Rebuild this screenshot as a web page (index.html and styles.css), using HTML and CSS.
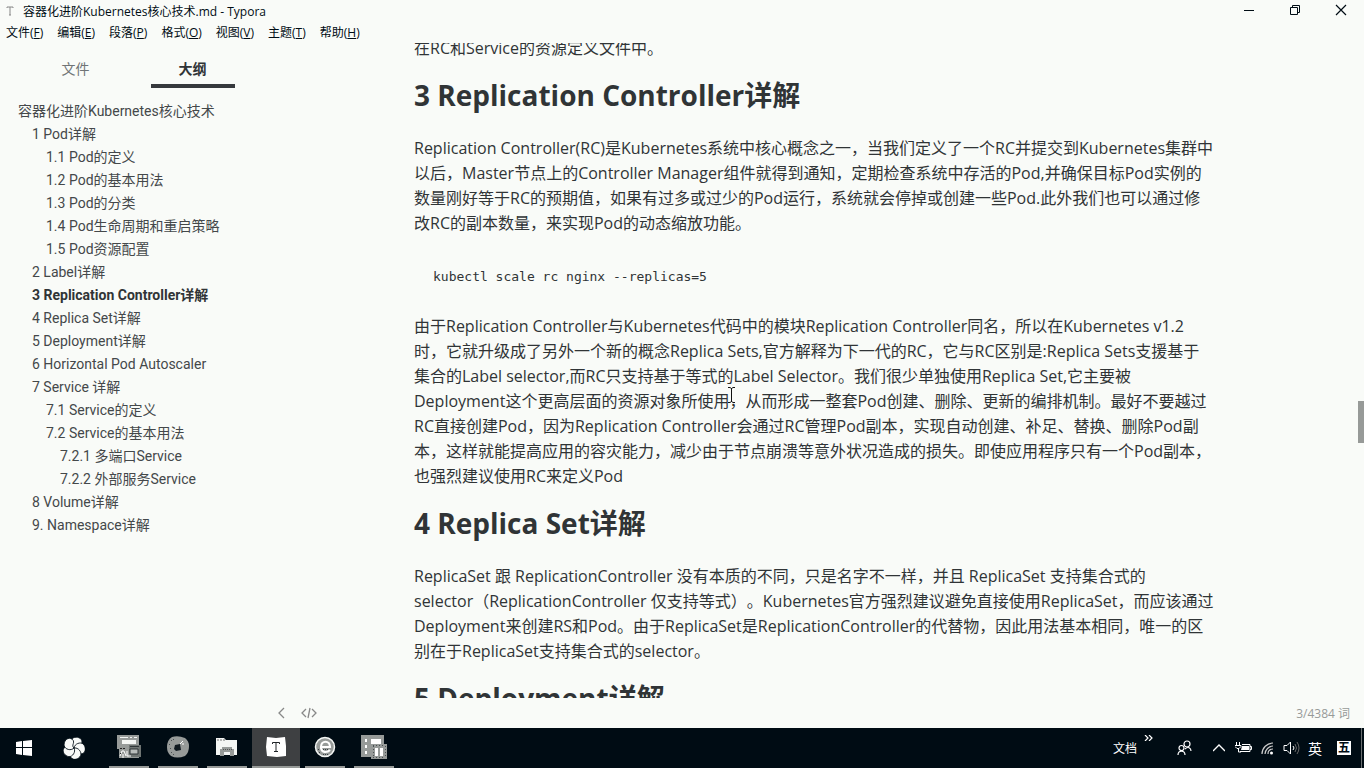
FILE: index.html
```html
<!DOCTYPE html>
<html lang="zh-CN">
<head>
<meta charset="utf-8">
<title>容器化进阶Kubernetes核心技术.md - Typora</title>
<link rel="stylesheet" href="styles.css">
</head>
<body>
<div class="app">
  <header class="titlebar">
    <svg class="app-icon" width="8" height="10" viewBox="0 0 8 10"><path d="M1 2V1h6v1M4 1v8M3 9h2" fill="none" stroke="#888"/></svg>
    <span class="window-title">容器化进阶Kubernetes核心技术.md - Typora</span>
    <div class="window-controls">
      <button type="button" aria-label="最小化"><svg width="12" height="12" viewBox="0 0 12 12"><path d="M1 6.500h10" stroke="#000c14"/></svg></button>
      <button type="button" aria-label="还原"><svg width="12" height="12" viewBox="0 0 12 12"><path d="M1.500 3.500h7v7h-7zM3.500 3.500v-2h7v7h-2" fill="none" stroke="#000c14"/></svg></button>
      <button type="button" aria-label="关闭"><svg width="12" height="12" viewBox="0 0 12 12"><path d="M1 1l10 10M11 1L1 11" stroke="#000c14" stroke-width="1.200"/></svg></button>
    </div>
  </header>
  <nav class="menubar" aria-label="菜单">
    <button type="button">文件(<u>F</u>)</button>
    <button type="button">编辑(<u>E</u>)</button>
    <button type="button">段落(<u>P</u>)</button>
    <button type="button">格式(<u>O</u>)</button>
    <button type="button">视图(<u>V</u>)</button>
    <button type="button">主题(<u>T</u>)</button>
    <button type="button">帮助(<u>H</u>)</button>
  </nav>
  <div class="workspace">
    <aside class="sidebar">
      <div class="tabs">
        <button type="button" class="tab">文件</button>
        <button type="button" class="tab tab-active">大纲</button>
      </div>
      <nav class="outline" aria-label="大纲">
        <a href="#top" class="level-1">容器化进阶Kubernetes核心技术</a>
        <a href="#pod" class="level-2">1 Pod详解</a>
        <a href="#pod-1" class="level-3">1.1 Pod的定义</a>
        <a href="#pod-2" class="level-3">1.2 Pod的基本用法</a>
        <a href="#pod-3" class="level-3">1.3 Pod的分类</a>
        <a href="#pod-4" class="level-3">1.4 Pod生命周期和重启策略</a>
        <a href="#pod-5" class="level-3">1.5 Pod资源配置</a>
        <a href="#label" class="level-2">2 Label详解</a>
        <a href="#rc" class="level-2 current">3 Replication Controller详解</a>
        <a href="#rs" class="level-2">4 Replica Set详解</a>
        <a href="#deployment" class="level-2">5 Deployment详解</a>
        <a href="#hpa" class="level-2">6 Horizontal Pod Autoscaler</a>
        <a href="#service" class="level-2">7 Service 详解</a>
        <a href="#service-1" class="level-3">7.1 Service的定义</a>
        <a href="#service-2" class="level-3">7.2 Service的基本用法</a>
        <a href="#service-21" class="level-4">7.2.1 多端口Service</a>
        <a href="#service-22" class="level-4">7.2.2 外部服务Service</a>
        <a href="#volume" class="level-2">8 Volume详解</a>
        <a href="#namespace" class="level-2">9. Namespace详解</a>
      </nav>
    </aside>
    <main class="editor">
      <article class="document">
        <p>在RC和Service的资源定义文件中。</p>
        <h2 id="rc">3 Replication Controller详解</h2>
        <p>Replication Controller(RC)是Kubernetes系统中核心概念之一，当我们定义了一个RC并提交到Kubernetes集群中<br>以后，Master节点上的Controller Manager组件就得到通知，定期检查系统中存活的Pod,并确保目标Pod实例的<br>数量刚好等于RC的预期值，如果有过多或过少的Pod运行，系统就会停掉或创建一些Pod.此外我们也可以通过修<br>改RC的副本数量，来实现Pod的动态缩放功能。</p>
        <pre><code>kubectl scale rc nginx --replicas=5</code></pre>
        <p>由于Replication Controller与Kubernetes代码中的模块Replication Controller同名，所以在Kubernetes v1.2<br>时，它就升级成了另外一个新的概念Replica Sets,官方解释为下一代的RC，它与RC区别是:Replica Sets支援基于<br>集合的Label selector,而RC只支持基于等式的Label Selector。我们很少单独使用Replica Set,它主要被<br>Deployment这个更高层面的资源对象所使用，从而形成一整套Pod创建、删除、更新的编排机制。最好不要越过<br>RC直接创建Pod，因为Replication Controller会通过RC管理Pod副本，实现自动创建、补足、替换、删除Pod副<br>本，这样就能提高应用的容灾能力，减少由于节点崩溃等意外状况造成的损失。即使应用程序只有一个Pod副本，<br>也强烈建议使用RC来定义Pod</p>
        <h2 id="rs">4 Replica Set详解</h2>
        <p>ReplicaSet 跟 ReplicationController 没有本质的不同，只是名字不一样，并且 ReplicaSet 支持集合式的<br>selector（ReplicationController 仅支持等式）。Kubernetes官方强烈建议避免直接使用ReplicaSet，而应该通过<br>Deployment来创建RS和Pod。由于ReplicaSet是ReplicationController的代替物，因此用法基本相同，唯一的区<br>别在于ReplicaSet支持集合式的selector。</p>
        <h2 id="deployment">5 Deployment详解</h2>
      </article>
      <div class="scroll-thumb"></div>
    </main>
  </div>
  <footer class="statusbar">
    <button type="button" aria-label="隐藏侧边栏"><svg width="8" height="12" viewBox="0 0 8 12"><path d="M7 1L2 6l5 5" fill="none" stroke="#888" stroke-width="1.300"/></svg></button>
    <button type="button" aria-label="源代码模式"><svg width="16" height="12" viewBox="0 0 16 12"><path d="M5 2L1 6l4 4M11 2l4 4-4 4M9 1L7 11" fill="none" stroke="#888" stroke-width="1.300"/></svg></button>
    <span class="word-count">3/4384 词</span>
  </footer>
  <footer class="taskbar">
    <button type="button" class="task" aria-label="开始"><svg width="16" height="16" viewBox="0 0 16 16"><path d="M0 2l6-1v6H0zM7 1l9-1v7H7zM0 8h6v7l-6-1zM7 8h9v8l-9-1z" fill="#fff"/></svg></button>
    <button type="button" class="task fan" aria-label="浏览器"><svg width="22" height="22" viewBox="0 0 22 22"><g fill="#f8faf8" stroke="#000c14" stroke-width=".8"><path id="blade" d="M11 11C7 9 7 3 10 1c4-2 9 0 9 4 0 3-2 4-4 4s-3 0-4 2z"/><use href="#blade" transform="rotate(72 11 11)"/><use href="#blade" transform="rotate(144 11 11)"/><use href="#blade" transform="rotate(216 11 11)"/><use href="#blade" transform="rotate(288 11 11)"/></g></svg></button>
    <div class="running">
      <button type="button" class="task open" aria-label="虚拟机"><svg width="24" height="24" viewBox="0 0 24 24"><path d="M0 0h22v23H2V14H0z" fill="#979b99"/><path d="M5 5h14v4H5z" fill="#f4f6f4"/><path d="M3 2.500h8M13 2.500h2M17 2.500h3" stroke="#f4f6f4"/><path d="M12 10h12v12H12z" fill="#6f7573"/><path d="M13 11.500h9" stroke="#303638"/><path d="M13 14h8v5h-8z" fill="#b9bdbb" stroke="#303638"/><path d="M3 21l2-5h2l2 5M6 23v-4M10 16v5h4" fill="none" stroke="#fff"/><path d="M3 13.500h6M3 18.500h1" stroke="#222" stroke-dasharray="2 1"/></svg></button>
      <button type="button" class="task open" aria-label="录屏"><svg width="22" height="22" viewBox="0 0 22 22"><path d="M5 1Q11-1 18 2q4 3 4 8 0 7-4 10-8 3-14 0-4-3-4-9 0-7 5-10z" fill="#979b99"/><path d="M8 9l5-1 1 6-5 1-2-2z" fill="#101a20"/><path d="M13 8l3-3M15 8h2" stroke="#fff"/><path d="M4 4.500h1M6 3.500h1M2 8.500h1M4 16.500h1M3 12.500h1M6 18.500h1" stroke="#4a5052"/></svg></button>
      <button type="button" class="task open" aria-label="文件资源管理器"><svg width="22" height="20" viewBox="0 0 22 20"><path d="M0 1h8l2 2h11v15H0z" fill="#f4f6f4"/><path d="M1 3h8" stroke="#777" stroke-dasharray="2 1"/><path d="M4 12h2v-2h10v2h2v7h-4v-4H8v4H4z" fill="#979b99"/><path d="M7 12.500h9" stroke="#555" stroke-dasharray="1 1"/></svg></button>
      <button type="button" class="task open selected" aria-label="Typora"><svg width="22" height="22" viewBox="0 0 22 22"><path d="M2 1l9 1 9-1 1 9v10l-9 1-10-1-1-9z" fill="#fff"/><path d="M7.500 8V6.500h7V8M11 6v10M9 15.500h4" fill="none" stroke="#202428"/></svg></button>
      <button type="button" class="task open" aria-label="Internet Explorer"><svg width="22" height="22" viewBox="0 0 22 22"><circle cx="11" cy="11" r="9.500" fill="#979b99" stroke="#f4f6f4" stroke-width="1.500"/><path d="M7 11h9c0-7-9-7-9 0 0 6 6 6 9 3" fill="none" stroke="#fff" stroke-width="2.200"/><path d="M4 13.500h2M9 13.500h5M5 16.500h2M9 18.500h5" stroke="#394044" stroke-dasharray="1 1"/></svg></button>
      <button type="button" class="task open" aria-label="服务器管理器"><svg width="26" height="26" viewBox="0 0 26 26"><path d="M0 1h23v9h3v15H10v-2H0z" fill="#979b99"/><path d="M10 5h10v5H10zM4 5h2v3H4zM4 11h2v3H4zM4 17h2v3H4zM14 14h3v8h-3zM19 14h3v8h-3z" fill="#fff"/><path d="M12 11.500h12M12 23.500h12M12.500 12v11M24.500 12v11" fill="none" stroke="#4a5052" stroke-dasharray="1 2"/></svg></button>
    </div>
    <div class="tray">
      <span class="toolbar-label">文档</span>
      <button type="button" class="more" aria-label="更多"><svg width="9" height="6" viewBox="0 0 9 6"><path d="M1 0l3 3-3 3M5 0l3 3-3 3" fill="none" stroke="#fff" stroke-width="1.200"/></svg></button>
      <button type="button" class="people" aria-label="人脉"><svg width="15" height="16" viewBox="0 0 15 16"><g fill="none" stroke="#fff" stroke-width="1.200"><circle cx="10" cy="4" r="3"/><circle cx="4.500" cy="8" r="2.500"/><path d="M1 15c0-5 7-5 7 0M8 9c3-3 6-1 6 2"/></g></svg></button>
      <button type="button" class="slot" aria-label="显示隐藏的图标"><svg width="12" height="8" viewBox="0 0 12 8"><path d="M0 7l6-6 6 6" fill="none" stroke="#fff" stroke-width="1.400"/></svg></button>
      <button type="button" class="slot" aria-label="电源"><svg width="17" height="12" viewBox="0 0 17 12"><path d="M1.500 0v3M4.500 0v3M0 3.500h6v1L4 6.500H2L0 4.500M3.500 6v4H6" fill="none" stroke="#fff"/><path d="M7 2.500h8v7H5M15 4.500h1.500v3H15" fill="none" stroke="#fff"/><path d="M7 4h7v4H6z" fill="#fff"/></svg></button>
      <button type="button" class="slot" aria-label="网络"><svg width="13" height="13" viewBox="0 0 13 13"><path d="M1 12C1 6 6 1 12 1M4 12c0-4 4-8 8-8M7 12c0-3 2-5 5-5" fill="none" stroke="#ccc" stroke-width="1.200"/><circle cx="10.500" cy="11" r="1.500" fill="#fff"/></svg></button>
      <button type="button" class="slot" aria-label="音量"><svg width="17" height="14" viewBox="0 0 17 14"><path d="M1 4.500h3l3.500-3.500v12L4 9.500H1z" fill="none" stroke="#fff"/><path d="M10 5q2 2 0 4" fill="none" stroke="#fff"/><path d="M12 3q3 4 0 8M14 1q4 6 0 12" fill="none" stroke="#666"/></svg></button>
      <button type="button" class="slot lang">英</button>
      <button type="button" class="ime"><span>五</span></button>
      <button type="button" class="show-desktop" aria-label="显示桌面"></button>
    </div>
  </footer>
  <svg class="pointer" width="7" height="16" viewBox="0 0 7 16"><path d="M0 .5h2l1.500 1L5 .5h2M3.500 1v14M0 15.500h2l1.500-1 1.500 1h2" fill="none" stroke="#111"/></svg>
</div>
</body>
</html>
```

FILE: styles.css
```css
* { box-sizing: border-box; }

body {
  margin: 0;
  background: #f9fbf8;
  color: #303436;
  font-family: "Open Sans", "Noto Sans CJK SC", sans-serif;
  text-spacing-trim: space-all;
}

button {
  margin: 0;
  padding: 0;
  border: 0;
  background: none;
  color: inherit;
  font: inherit;
}

svg { display: block; }

.app {
  display: flex;
  flex-direction: column;
  height: 100vh;
  overflow: hidden;
}

.titlebar {
  display: flex;
  flex: none;
  align-items: center;
  height: 22px;
  padding-left: 6px;
  color: #000c14;
  font-size: 12px;
}

.window-title { margin-left: 9px; white-space: nowrap; }

.window-controls { display: flex; margin-left: auto; height: 20px; align-self: flex-start; }

.window-controls button { display: grid; place-items: center; width: 46px; }

.menubar {
  display: flex;
  flex: none;
  gap: 14px;
  height: 21px;
  padding-left: 6px;
  color: #000c14;
  font-size: 12px;
  line-height: 21px;
}

.menubar button { white-space: nowrap; }

.workspace { display: flex; flex: 1; min-height: 0; }

.sidebar {
  flex: none;
  width: 264px;
  font-family: Roboto, "Noto Sans CJK SC", sans-serif;
  font-size: 14px;
}

.tabs { display: flex; padding: 0 13px 0 17px; height: 46px; }

.tab {
  display: flex;
  flex: 1;
  flex-direction: column;
  align-items: center;
  padding-top: 16px;
  color: #707476;
  line-height: 20px;
}

.tab-active { color: #303436; font-weight: 700; }

.tab-active::after {
  content: "";
  width: 84px;
  height: 4px;
  margin-top: 5px;
  background: #36393d;
}

.outline { display: flex; flex-direction: column; padding: 11px 0 0 18px; }

.outline a {
  color: #44484a;
  line-height: 23px;
  text-decoration: none;
  white-space: nowrap;
}

.outline .level-2 { padding-left: 14px; }
.outline .level-3 { padding-left: 28px; }
.outline .level-4 { padding-left: 42px; }
.outline .current { color: #303436; font-weight: 700; }

.editor { position: relative; flex: 1; min-width: 0; overflow: hidden; }

.document {
  max-width: 800px;
  margin: -7px auto 0;
  font-size: 16px;
  line-height: 25px;
}

.document p { margin: 0; white-space: nowrap; }

.document h2 {
  margin: 17px 0 24px;
  font-size: 28px;
  font-weight: 700;
  line-height: 34px;
}

.document pre {
  margin: 0;
  padding: 28px 19px 25px;
  font-family: "DejaVu Sans Mono", monospace;
  font-size: 13px;
}

.document code { font: inherit; }

.scroll-thumb {
  position: absolute;
  top: 358px;
  right: 0;
  width: 6px;
  height: 42px;
  background: #979a98;
}

.statusbar {
  display: flex;
  flex: none;
  align-items: center;
  gap: 16px;
  height: 30px;
  padding: 0 14px 0 277px;
}

.word-count { margin-left: auto; color: #979a98; font-size: 12px; }

.taskbar {
  display: flex;
  flex: none;
  height: 40px;
  background: #000c14;
  color: #fff;
}

.task { display: grid; place-items: center; width: 48px; }
.fan { margin: 0 7px 0 2px; }

.running { display: flex; gap: 1px; }

.open { grid-template-rows: 1fr 2px; }

.open::after { content: ""; width: 40px; height: 2px; background: #979a98; }

.selected { background: #3e4042; }
.selected::after { width: 48px; }

.tray { display: flex; align-items: center; margin-left: auto; font-size: 12px; }

.toolbar-label { margin-right: 7px; }
.more { align-self: flex-start; margin-right: 8px; padding-top: 7px; }
.people { display: grid; place-items: center; width: 46px; }
.slot { display: grid; place-items: center; width: 24px; height: 40px; }
.lang { font-size: 14px; }
.ime { display: grid; place-items: center; width: 34px; }

.ime span {
  width: 14px;
  background: #fff;
  color: #000c14;
  font-size: 12px;
  font-weight: 700;
  line-height: 14px;
}

.show-desktop { width: 3px; height: 40px; border-left: 1px solid #6a6e70; }

.pointer { position: absolute; top: 387px; left: 728px; }
```
